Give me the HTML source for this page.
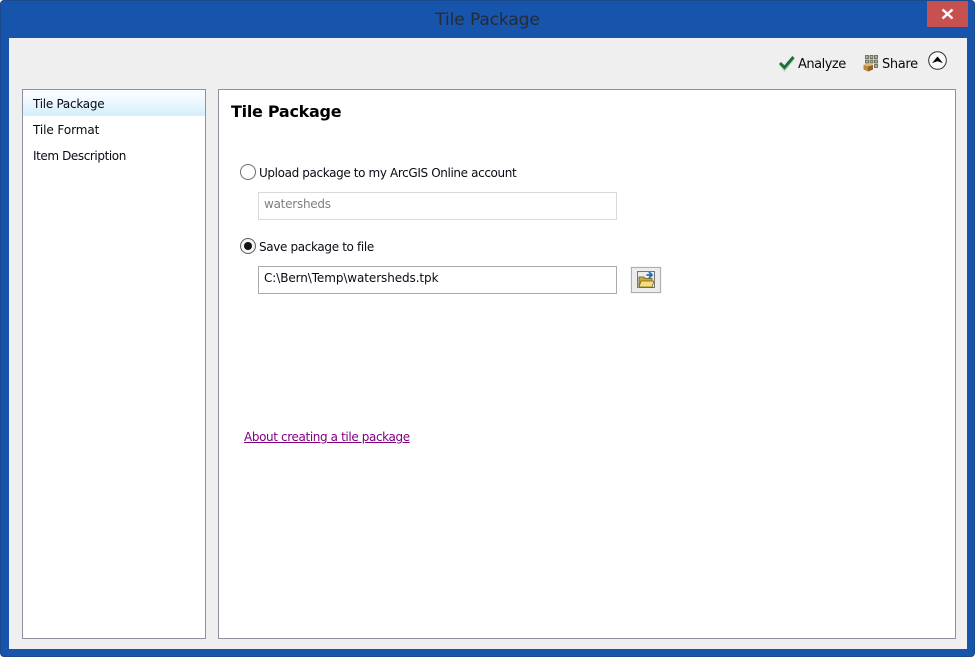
<!DOCTYPE html>
<html>
<head>
<meta charset="utf-8">
<style>
html,body{margin:0;padding:0;background:#fff;}
body{width:976px;height:658px;overflow:hidden;position:relative;font-family:"DejaVu Sans","Liberation Sans",sans-serif;color:#000;}
div,span,a{position:absolute;white-space:nowrap;box-sizing:border-box;}
.t{font-size:12px;line-height:16px;letter-spacing:-.35px;color:#0a0a14;}
svg{position:absolute;overflow:visible;}
</style>
</head>
<body>
<div style="left:0;top:0;width:975px;height:657px;background:#1655ab;border:1px solid #1a4a8c;border-radius:4px;"></div>
<div style="left:927px;top:1px;width:41px;height:26px;background:#c75050;"></div>
<svg style="left:927px;top:1px" width="41" height="26"><path d="M15.5 8.5L25.5 17.5M25.5 8.5L15.5 17.5" stroke="#fff" stroke-width="2.4" fill="none"/></svg>
<div style="left:0;top:10px;width:975px;text-align:center;font-family:'DejaVu Sans',sans-serif;font-size:17px;line-height:20px;color:#2a2a34;letter-spacing:-.1px;">Tile Package</div>

<div style="left:9px;top:38px;width:958px;height:611px;background:#efefef;"></div>

<svg style="left:778px;top:54px" width="18" height="18"><path d="M2.5 11L6.5 16L15.5 5" stroke="#cfcfcf" stroke-width="2.5" fill="none"/><path d="M2 9L6.5 13.5L15.5 3" stroke="#1a7433" stroke-width="3" fill="none"/></svg>
<span class="t" style="left:798px;top:57px;font-size:13px;letter-spacing:-.5px;">Analyze</span>

<svg style="left:863px;top:54px" width="18" height="18">
<g fill="#b0b090" stroke="#4c4c42" stroke-width=".7">
<rect x="2.5" y="1.5" width="3" height="3"/><rect x="7" y="1.5" width="3" height="3"/><rect x="11.5" y="1.5" width="3" height="3"/>
<rect x="2.5" y="6" width="3" height="3"/><rect x="7" y="6" width="3" height="3"/><rect x="11.5" y="6" width="3" height="3"/>
<rect x="11.5" y="10.5" width="3" height="3"/>
</g>
<path d="M0.5 11L5 9L10 11V15.5L5 17.5L0.5 15.5Z" fill="#b9893f"/><path d="M0.5 11L5 12.5L10 11L5 9Z" fill="#dcb877"/><path d="M5 12.5V17.5L10 15.5V11Z" fill="#8f6426"/>
</svg>
<span class="t" style="left:882px;top:57px;font-size:13px;">Share</span>

<svg style="left:928px;top:51px" width="19" height="19"><circle cx="9.5" cy="9.5" r="8.8" fill="#fafafa" stroke="#333" stroke-width="1"/><path d="M5 11.5L9.5 6L14 11.5L9.5 9.8Z" fill="#000" stroke="#000" stroke-width=".6"/></svg>

<div style="left:22px;top:89px;width:184px;height:550px;background:#fff;border:1px solid #8e8f9f;"></div>
<div style="left:23px;top:90px;width:182px;height:26px;background:linear-gradient(#fafdff,#f3fbff 30%,#d3eefc);border-radius:2px;"></div>
<span class="t" style="left:33px;top:96px;letter-spacing:-.27px;">Tile Package</span>
<span class="t" style="left:33px;top:122px;letter-spacing:-.08px;">Tile Format</span>
<span class="t" style="left:33px;top:148px;letter-spacing:-.41px;">Item Description</span>

<div style="left:218px;top:89px;width:738px;height:550px;background:#fff;border:1px solid #8e8f9f;"></div>
<span style="left:231px;top:101px;font-family:'DejaVu Sans',sans-serif;font-weight:bold;font-size:16px;line-height:21px;letter-spacing:-.28px;color:#000;">Tile Package</span>

<svg style="left:240px;top:164px" width="17" height="17"><circle cx="8" cy="8" r="7.5" fill="#fff" stroke="#6e6e6e" stroke-width="1"/></svg>
<span class="t" style="left:259px;top:165px;letter-spacing:-.37px;">Upload package to my ArcGIS Online account</span>
<div style="left:258px;top:192px;width:359px;height:28px;background:#fff;border:1px solid #d9d9d9;"></div>
<span class="t" style="left:264px;top:196px;color:#808080;letter-spacing:-.25px;">watersheds</span>

<svg style="left:240px;top:238px" width="17" height="17"><circle cx="8" cy="8" r="7.5" fill="#f4f4f4" stroke="#5f5f5f" stroke-width="1"/><circle cx="8" cy="8" r="4" fill="#111"/></svg>
<span class="t" style="left:259px;top:239px;">Save package to file</span>
<div style="left:258px;top:266px;width:359px;height:28px;background:#fff;border:1px solid #ababab;"></div>
<span class="t" style="left:264px;top:270px;letter-spacing:-.09px;">C:\Bern\Temp\watersheds.tpk</span>

<div style="left:631px;top:267px;width:30px;height:26px;background:#ececec;border:1px solid #adadad;box-shadow:0 0 0 1px #f6f6f6;"></div>
<svg style="left:631px;top:267px" width="30" height="26">
<rect x="6.5" y="4.5" width="17" height="16" fill="none" stroke="#000" stroke-width="1" stroke-dasharray="1 1"/>
<path d="M8 10H13L14 11.5H21V20H8Z" fill="#c8a93c" stroke="#6a5618" stroke-width=".8"/>
<path d="M8 20L10 14H23L21 20Z" fill="#f6dd7e" stroke="#7a6420" stroke-width=".8"/>
<path d="M15.5 8H20M18 5L21 8L18 11" stroke="#1c6fb5" stroke-width="1.8" fill="none"/>
</svg>

<a style="left:244px;top:429px;font-size:12px;line-height:16px;letter-spacing:-.38px;color:#800080;text-decoration:underline;">About creating a tile package</a>
</body>
</html>
